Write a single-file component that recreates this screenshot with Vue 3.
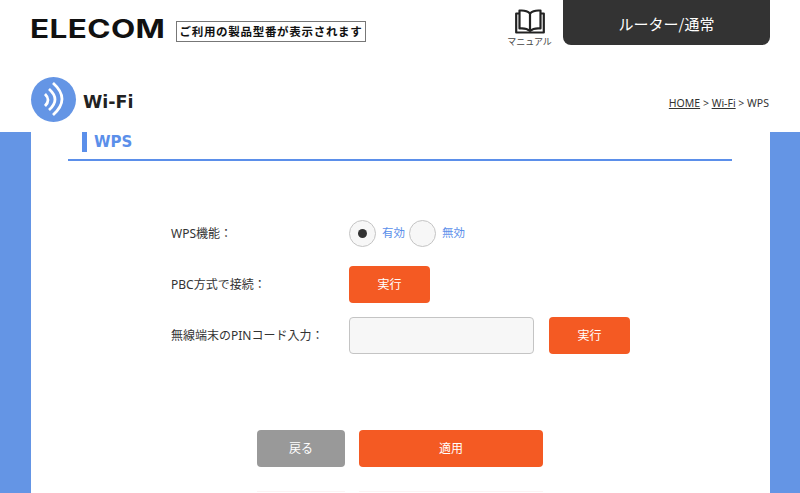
<script setup>
const rows = [
  { id: 'pbc', label: 'PBC方式で接続：' },
  { id: 'pin', label: '無線端末のPINコード入力：' },
]
</script>

<template>
  <div class="page">
    <header class="top">
      <div class="brand">
        <span class="brand__logo">ELECOM</span>
        <span class="brand__model">ご利用の製品型番が表示されます</span>
      </div>
      <div class="top__right">
        <a class="manual">
          <svg class="manual__icon" viewBox="0 0 30 25" fill="none" stroke="#222" stroke-width="2.2">
            <path d="M15 4.500C12.500 2 8.500 1.200 4.500 1.600V19.500C8.500 19.100 12.500 19.800 15 22C17.500 19.800 21.500 19.100 25.500 19.500V1.600C21.500 1.200 17.500 2 15 4.500Z" stroke-linejoin="round" />
            <path d="M15 4.500V22" />
            <path d="M4.500 4.500H1.200V23.500H28.800V4.500H25.500" stroke-linejoin="round" />
          </svg>
          <span class="manual__label">マニュアル</span>
        </a>
        <div class="mode">ルーター/通常</div>
      </div>
    </header>

    <div class="title-bar">
      <div class="title-bar__left">
        <span class="title-bar__icon">
          <svg viewBox="0 0 45 45" fill="none" stroke="#fff" stroke-width="2.8">
            <path d="M14 17Q20 23 14 29" />
            <path d="M18 12Q30 22.500 18 33" />
            <path d="M22 6Q40 22 22 38" />
          </svg>
        </span>
        <h1 class="title-bar__text">Wi-Fi</h1>
      </div>
      <nav class="crumbs">
        <a>HOME</a> &gt; <a>Wi-Fi</a> &gt; WPS
      </nav>
    </div>

    <main class="stage">
      <section class="panel">
        <h2 class="heading"><span>WPS</span></h2>

        <div class="form">
          <div class="form__row form__row--radio">
            <span class="form__label">WPS機能：</span>
            <div class="radios">
              <span class="radio radio--on"></span>
              <span class="radio__text">有効</span>
              <span class="radio"></span>
              <span class="radio__text">無効</span>
            </div>
          </div>
          <div class="form__row form__row--pbc">
            <span class="form__label">{{ rows[0].label }}</span>
            <button type="button" class="btn btn--run">実行</button>
          </div>
          <div class="form__row form__row--pin">
            <span class="form__label">{{ rows[1].label }}</span>
            <input class="pin" type="text" />
            <button type="button" class="btn btn--run">実行</button>
          </div>
        </div>

        <div class="actions">
          <button type="button" class="btn btn--back">戻る</button>
          <button type="button" class="btn btn--apply">適用</button>
        </div>
        <div class="actions actions--ghost">
          <span></span>
          <span></span>
        </div>
      </section>
    </main>
  </div>
</template>

<style>
html,
body {
  margin: 0;
  height: 493px;
  overflow: hidden;
  background: #fff;
}
</style>

<style scoped>
.page {
  width: 800px;
  height: 493px;
  overflow: hidden;
  font-family: 'Noto Sans', 'Noto Sans CJK JP', sans-serif;
  color: #333;
}

.top {
  height: 45px;
  display: flex;
  justify-content: space-between;
  padding: 0 30px 0 31px;
}

.brand {
  display: flex;
  align-items: flex-start;
  padding-top: 21px;
}

.brand__logo {
  width: 134px;
  height: 18px;
  margin-top: -1px;
  margin-bottom: -1px;
  font-family: 'Inter', sans-serif;
  font-weight: 700;
  font-size: 25px;
  line-height: 18px;
  letter-spacing: 0.3px;
  color: #111;
  transform: translateX(-1px) scaleX(1.26);
  transform-origin: left center;
  white-space: nowrap;
}

.brand__model {
  margin: 0 0 0 11px;
  height: 21px;
  width: 190px;
  box-sizing: border-box;
  border: 1px solid #777;
  font-family: 'Noto Sans CJK JP', sans-serif;
  font-weight: 700;
  font-size: 11.500px;
  line-height: 19px;
  letter-spacing: 0.7px;
  text-align: center;
  white-space: nowrap;
  color: #111;
}

.top__right {
  display: flex;
  align-items: flex-start;
}

.manual {
  width: 45px;
  margin-right: 11px;
  display: flex;
  flex-direction: column;
  align-items: center;
  padding-top: 9px;
}

.manual__icon {
  width: 30px;
  height: 25px;
}

.manual__label {
  margin-top: 2px;
  font-family: 'Noto Sans CJK JP', sans-serif;
  font-size: 9px;
  line-height: 12px;
  white-space: nowrap;
  color: #444;
}

.mode {
  width: 207px;
  height: 45px;
  box-sizing: border-box;
  padding-top: 8px;
  background: #333;
  border-radius: 0 0 8px 8px;
  font-size: 15px;
  font-family: 'Noto Sans CJK JP', sans-serif;
  line-height: 32px;
  text-align: center;
  color: #fff;
}

.title-bar {
  height: 87px;
  box-sizing: border-box;
  padding: 32px 31px 0;
  display: flex;
  justify-content: space-between;
}

.title-bar__left {
  display: flex;
  align-items: flex-start;
}

.title-bar__icon {
  width: 45px;
  height: 45px;
  border-radius: 50%;
  background: #6495e5;
}

.title-bar__icon svg {
  display: block;
}

.title-bar__text {
  margin: 12px 0 0 7px;
  font-family: 'DejaVu Sans', sans-serif;
  font-size: 17.500px;
  font-weight: 700;
  line-height: 26px;
  color: #222;
}

.crumbs {
  margin-top: 19px;
  font-size: 10.500px;
  line-height: 14px;
  color: #333;
}

.crumbs a {
  text-decoration: underline;
}

.stage {
  height: 361px;
  padding: 0 30px 0 31px;
  background: #6495e5;
}

.panel {
  height: 100%;
  box-sizing: border-box;
  padding: 0 38px 0 37px;
  background: #fff;
}

.heading {
  margin: 0;
  height: 29px;
  box-sizing: border-box;
  padding-left: 14px;
  border-bottom: 2px solid #5b8fea;
  font-family: 'DejaVu Sans', sans-serif;
  font-size: 15px;
  font-weight: 700;
  line-height: 20px;
  color: #5b8fea;
}

.heading span {
  display: block;
  height: 20px;
  padding-left: 7px;
  border-left: 5px solid #5b8fea;
}

.form {
  padding: 59px 0 0 103px;
}

.form__row {
  display: grid;
  grid-template-columns: 178px auto auto;
  justify-content: start;
  align-items: center;
}

.form__label {
  padding-bottom: 2px;
  font-size: 12px;
  color: #333;
  white-space: nowrap;
}

.form__row--radio {
  height: 27px;
}

.form__row--pbc {
  margin-top: 19px;
  height: 37px;
}

.form__row--pin {
  margin-top: 14px;
  height: 37px;
}

.radios {
  display: flex;
  align-items: center;
}

.radio {
  width: 27px;
  height: 27px;
  box-sizing: border-box;
  border: 1px solid #c4c4c4;
  border-radius: 50%;
  background: #f7f7f7;
  display: flex;
  align-items: center;
  justify-content: center;
}

.radio--on::after {
  content: '';
  width: 9px;
  height: 9px;
  border-radius: 50%;
  background: #333;
}

.radio__text {
  width: 33px;
  padding: 0 0 3px 6px;
  box-sizing: border-box;
  font-family: 'Noto Sans CJK JP', sans-serif;
  font-size: 11.500px;
  white-space: nowrap;
  color: #5b8fea;
}

.btn {
  border: 0;
  padding: 0 0 2px;
  border-radius: 4px;
  font-family: 'Noto Sans CJK JP', sans-serif;
  font-size: 12px;
  color: #fff;
}

.btn--run {
  width: 81px;
  height: 37px;
  background: #f45a23;
}

.pin {
  width: 185px;
  height: 37px;
  margin: 0 15px 0 0;
  box-sizing: border-box;
  border: 1px solid #c4c4c4;
  border-radius: 4px;
  background: #f7f7f7;
}

.actions {
  margin: 76px 0 0 189px;
  display: flex;
  gap: 14px;
}

.btn--back {
  width: 88px;
  height: 37px;
  background: #999;
}

.btn--apply {
  width: 184px;
  height: 37px;
  background: #f45a23;
}

.actions--ghost {
  margin-top: 24px;
}

.actions--ghost span {
  width: 88px;
  height: 1px;
  background: #fdf3f3;
}

.actions--ghost span + span {
  width: 184px;
}
</style>
